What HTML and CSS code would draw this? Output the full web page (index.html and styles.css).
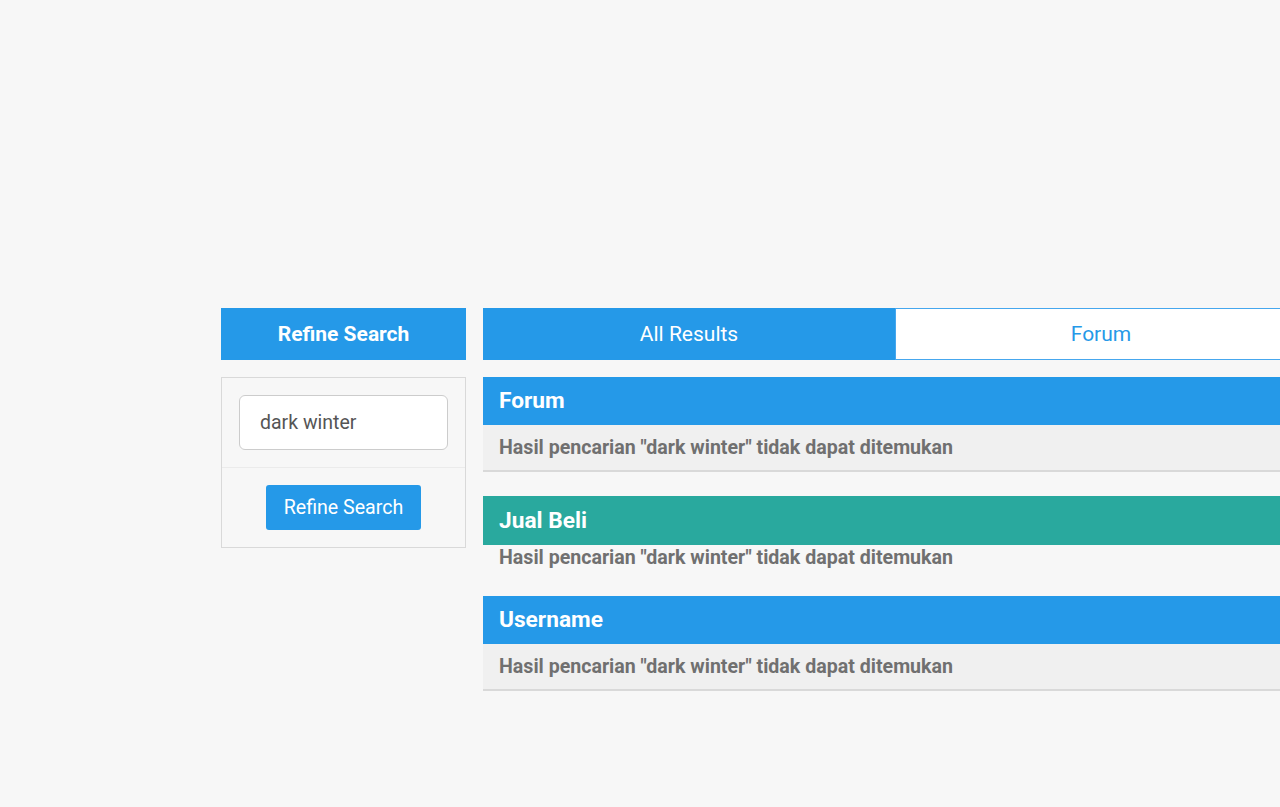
FILE: index.html
```html
<!DOCTYPE html>
<html lang="id">
<head>
<meta charset="utf-8">
<title>Search</title>
<link rel="stylesheet" href="styles.css">
</head>
<body>
<div class="page">
  <aside class="sidebar">
    <div class="side-head">Refine Search</div>
    <form class="refine-box">
      <div class="field">
        <input class="query" type="text" value="dark winter">
      </div>
      <div class="actions">
        <button class="btn" type="button">Refine Search</button>
      </div>
    </form>
  </aside>
  <main class="results">
    <nav class="tabs">
      <div class="tab tab-active">All Results</div>
      <div class="tab tab-idle">Forum</div>
    </nav>
    <section class="group group-forum">
      <h2 class="group-head head-blue">Forum</h2>
      <div class="group-body body-gray">Hasil pencarian "dark winter" tidak dapat ditemukan</div>
    </section>
    <section class="group group-jb">
      <h2 class="group-head head-teal">Jual Beli</h2>
      <div class="group-body body-plain">Hasil pencarian "dark winter" tidak dapat ditemukan</div>
    </section>
    <section class="group group-user">
      <h2 class="group-head head-blue">Username</h2>
      <div class="group-body body-gray">Hasil pencarian "dark winter" tidak dapat ditemukan</div>
    </section>
  </main>
</div>
</body>
</html>
```

FILE: styles.css
```css
html, body {
  margin: 0;
  padding: 0;
  background: #f7f7f7;
  font-family: Roboto, "Liberation Sans", Arial, sans-serif;
  overflow: hidden;
}
.page {
  display: flex;
  gap: 17px;
  padding: 308px 0 0 221px;
  width: 1300px;
}
.sidebar {
  width: 245px;
  flex: none;
}
.side-head {
  height: 52px;
  line-height: 52px;
  background: #2599e8;
  color: #fff;
  font-weight: 700;
  font-size: 21px;
  text-align: center;
}
.refine-box {
  margin: 17px 0 0;
  border: 1px solid #d9d9d9;
}
.field {
  padding: 17px;
  border-bottom: 1px solid #ebebeb;
}
.query {
  display: block;
  box-sizing: border-box;
  width: 100%;
  height: 55px;
  margin: 0;
  padding: 0 20px;
  border: 1px solid #cccccc;
  border-radius: 6px;
  background: #fff;
  font-family: inherit;
  font-size: 19.5px;
  color: #555;
  outline: none;
}
.actions {
  padding: 17px;
  text-align: center;
}
.btn {
  width: 155px;
  height: 45px;
  border: none;
  border-radius: 3px;
  background: #2599e8;
  color: #fff;
  font-family: inherit;
  font-size: 19.6px;
  padding: 0;
}
.results {
  width: 824px;
  flex: none;
}
.tabs {
  display: flex;
  height: 52px;
}
.tab {
  flex: 1;
  box-sizing: border-box;
  text-align: center;
  font-size: 21px;
  line-height: 50px;
}
.tab-active {
  background: #2599e8;
  color: #fff;
  border: 1px solid #2599e8;
}
.tab-idle {
  background: #fff;
  color: #2599e8;
  border: 1px solid #46a7ee;
}
.group-forum { margin-top: 17px; }
.group-jb { margin-top: 24px; }
.group-user { margin-top: 26px; }
.group-head {
  margin: 0;
  height: 48px;
  line-height: 48px;
  padding: 0 16px;
  color: #fff;
  font-size: 22.7px;
  font-weight: 700;
}
.group-jb .group-head {
  height: 49px;
  line-height: 49px;
}
.head-blue { background: #2599e8; }
.head-teal { background: #29a99e; }
.group-body {
  padding: 0 16px;
  font-size: 19.6px;
  font-weight: 700;
  line-height: 25px;
  color: #707070;
}
.body-gray {
  padding-top: 10px;
  padding-bottom: 10px;
  background: #f0f0f0;
  border-bottom: 2px solid #d9d9d9;
}
```
